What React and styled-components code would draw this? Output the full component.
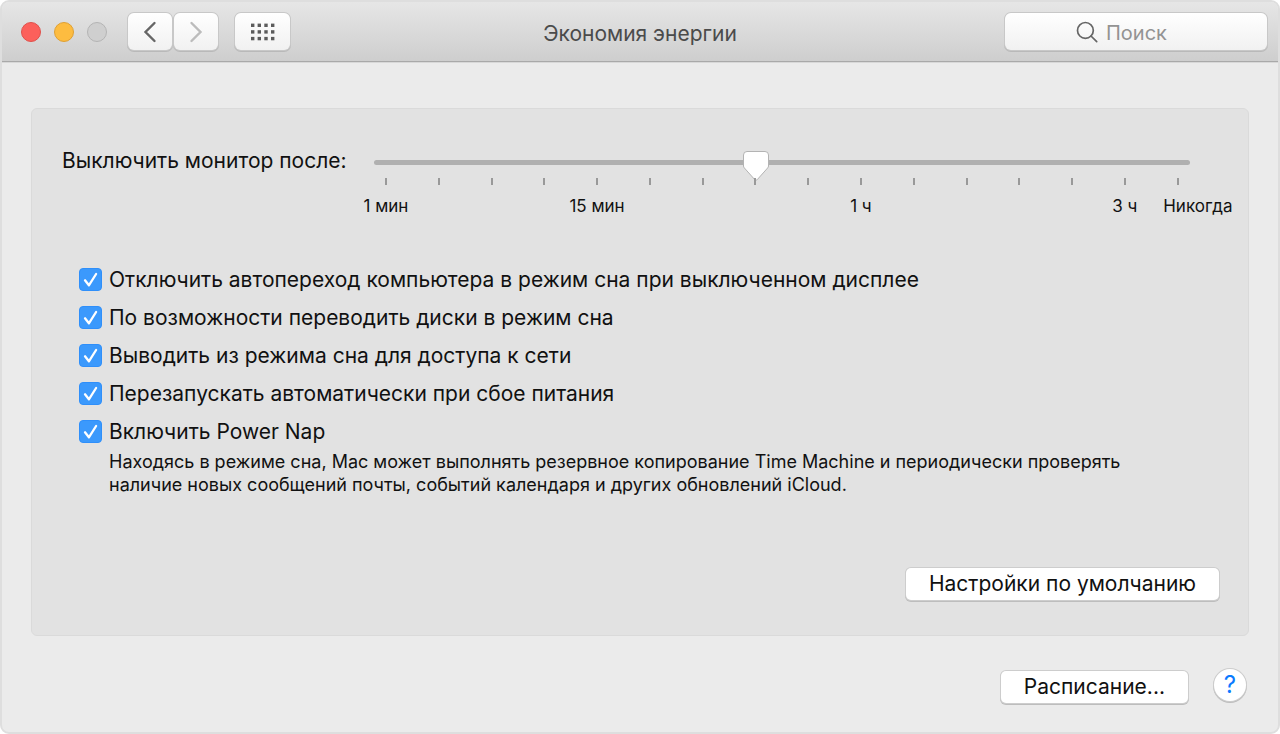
import React, { useState } from "react";
import styled, { createGlobalStyle } from "styled-components";

const GlobalStyle = createGlobalStyle`
  *, *::before, *::after { box-sizing: border-box; }
  body {
    margin: 0;
    background: #fff;
    color: #111;
    font-family: Inter, "Liberation Sans", sans-serif;
    font-size: 21px;
    line-height: 26px;
  }
  button, input { font: inherit; color: inherit; }
`;

const Window = styled.div`
  display: flex;
  flex-direction: column;
  min-height: 100vh;
  border: 2px solid #dedede;
  border-radius: 9px;
  background: #ebebeb;
  overflow: hidden;
`;

const TitleBar = styled.header`
  display: grid;
  grid-template-columns: 1fr auto 1fr;
  align-items: center;
  height: 60px;
  padding: 0 11px;
  border-bottom: 1px solid #a9a9a9;
  background: linear-gradient(#e6e6e6, #cecece);
  box-shadow: 0 1px 0 #d8d8d8;
`;

const TitleStart = styled.div`
  display: flex;
  align-items: center;
  gap: 17px;
  padding-left: 8px;
`;

const Lights = styled.div`
  display: flex;
  gap: 13px;
  margin-right: 4px;
`;

const lightColors = {
  close: ["#fc605b", "#e0504b"],
  minimize: ["#fdbc40", "#dfa033"],
  zoom: ["#cfcfcf", "#b4b4b4"],
};

const Light = styled.button`
  width: 20px;
  height: 20px;
  padding: 0;
  border: 1px solid ${(p) => lightColors[p.$kind][1]};
  border-radius: 50%;
  background: ${(p) => lightColors[p.$kind][0]};
`;

const NavGroup = styled.div`
  display: flex;
  gap: 2px;
`;

const ToolButton = styled.button`
  display: flex;
  align-items: center;
  justify-content: center;
  width: ${(p) => (p.$wide ? 55 : 44)}px;
  height: 37px;
  padding: 0;
  border: 0;
  border-radius: 6px;
  background: linear-gradient(#fff, #f1f1f1);
  box-shadow: 0 0 0 1px #c8c8c8, 0 1px 0 1px #b9b9b9;
  color: ${(p) => (p.disabled ? "#bcbcbc" : "#666")};
`;

const Title = styled.h1`
  margin: 0;
  padding-top: 4px;
  font-size: 21px;
  font-weight: 400;
  color: #4b4b4b;
`;

const SearchField = styled.label`
  justify-self: end;
  display: flex;
  align-items: center;
  gap: 8px;
  width: 262px;
  height: 37px;
  padding-left: 71px;
  border-radius: 6px;
  background: linear-gradient(#fff, #f1f1f1);
  box-shadow: 0 0 0 1px #c8c8c8, 0 1px 0 1px #b9b9b9;
  color: #666;
`;

const SearchInput = styled.input`
  flex: 1;
  min-width: 0;
  padding: 2px 0 0;
  border: 0;
  outline: 0;
  background: none;
  font-size: 20px;
  &::placeholder { color: #939393; opacity: 1; }
`;

const Body = styled.main`
  flex: 1;
  display: flex;
  flex-direction: column;
  padding: 46px 29px 29px;
`;

const Panel = styled.section`
  flex: 1;
  display: flex;
  flex-direction: column;
  padding: 33px 29px 35px 30px;
  border: 1px solid #dadada;
  border-radius: 6px;
  background: #e2e2e2;
`;

const SliderRow = styled.div`
  display: grid;
  grid-template-columns: auto 1fr;
  align-items: start;
  column-gap: 27px;
  padding-right: 29px;
`;

const SliderLabel = styled.label`
  padding-top: 6px;
`;

const thumbImage = encodeURIComponent(
  '<svg xmlns="http://www.w3.org/2000/svg" width="28" height="32" viewBox="0 0 28 32"><path d="M5 1.500h18q3.500 0 3.500 3.500v11q0 1-.8 1.900L15.200 29.700q-1.200 1.200-2.400 0L2.300 17.900Q1.500 17 1.500 16V5Q1.500 1.500 5 1.500Z" fill="#fff" stroke="#b3b3b3"/></svg>'
);

const Slider = styled.input`
  appearance: none;
  display: block;
  width: 100%;
  height: 32px;
  margin: 4px 0 0;
  background: none;
  &::-webkit-slider-runnable-track {
    height: 5px;
    border-radius: 3px;
    background: #b0b0b0;
  }
  &::-webkit-slider-thumb {
    appearance: none;
    width: 28px;
    height: 32px;
    margin-top: -10px;
    background: url("data:image/svg+xml,${thumbImage}") no-repeat;
  }
`;

const Scale = styled.div`
  display: grid;
  grid-template-columns: repeat(16, minmax(0, 1fr));
  margin: 0 -14px;
`;

const Stop = styled.div`
  display: flex;
  flex-direction: column;
  align-items: center;
  gap: 10px;
`;

const Tick = styled.span`
  width: 2px;
  height: 7px;
  background: #999;
`;

const StopLabel = styled.span`
  align-self: ${(p) => (p.$last ? "flex-start" : "center")};
  padding-left: ${(p) => (p.$last ? 12 : 0)}px;
  font-size: 17px;
  line-height: 22px;
  white-space: nowrap;
`;

const Options = styled.div`
  display: flex;
  flex-direction: column;
  gap: 2px;
  margin-top: 45px;
  padding-left: 17px;
`;

const Option = styled.label`
  display: flex;
  align-items: center;
  gap: 7px;
  height: 36px;
`;

const CheckBox = styled.span`
  display: grid;
  place-items: center;
  padding-bottom: 2px;
  & > * { grid-area: 1 / 1; }
  & > svg { pointer-events: none; }
  & > input:not(:checked) + svg { visibility: hidden; }
`;

const CheckInput = styled.input`
  appearance: none;
  width: 23px;
  height: 23px;
  margin: 0;
  border: 1px solid #2f8ffa;
  border-radius: 4px;
  background: #3b99fc;
  &:not(:checked) { background: #fff; border-color: #bdbdbd; }
`;

const Note = styled.p`
  max-width: 1100px;
  margin: 0;
  padding-left: 47px;
  font-size: 18px;
  line-height: 23px;
`;

const PushButton = styled.button`
  height: 32px;
  padding: 0 23px;
  border: 0;
  border-radius: 5px;
  background: #fff;
  box-shadow: 0 0 0 1px #cdcdcd, 0 1px 0 1px #bdbdbd;
  font-size: 21px;
`;

const PanelActions = styled.div`
  display: flex;
  justify-content: flex-end;
  margin-top: auto;
`;

const Footer = styled.footer`
  display: flex;
  justify-content: flex-end;
  align-items: flex-end;
  gap: 26px;
  padding: 33px 3px 0 0;
`;

const HelpButton = styled.button`
  width: 32px;
  height: 32px;
  margin-bottom: 2px;
  padding: 0;
  border: 0;
  border-radius: 50%;
  background: #fff;
  box-shadow: 0 0 0 1px #cdcdcd, 0 1px 0 1px #bdbdbd;
  color: #0a7aff;
  font-size: 24px;
`;

const stopLabels = { 0: "1 мин", 4: "15 мин", 9: "1 ч", 14: "3 ч", 15: "Никогда" };

const options = [
  "Отключить автопереход компьютера в режим сна при выключенном дисплее",
  "По возможности переводить диски в режим сна",
  "Выводить из режима сна для доступа к сети",
  "Перезапускать автоматически при сбое питания",
  "Включить Power Nap",
];

function Chevron({ forward }) {
  return (
    <svg width="14" height="22" viewBox="0 0 14 22" fill="none" stroke="currentColor" strokeWidth="2.400" strokeLinecap="round" aria-hidden="true">
      <path d={forward ? "M2.500 2 11.500 11 2.500 20" : "M11.500 2 2.500 11 11.500 20"} />
    </svg>
  );
}

function GridIcon() {
  return (
    <svg width="24" height="18" viewBox="0 0 24 18" fill="#5c5c5c" aria-hidden="true">
      {[0, 6.6, 13.3, 20].map((x) =>
        [0.6, 7.2, 13.9].map((y) => <rect key={`${x}-${y}`} x={x} y={y} width="3.400" height="3.400" />)
      )}
    </svg>
  );
}

export default function App() {
  const [delay, setDelay] = useState(7);
  return (
    <>
      <GlobalStyle />
      <Window>
        <TitleBar>
          <TitleStart>
            <Lights>
              <Light $kind="close" aria-label="Закрыть" />
              <Light $kind="minimize" aria-label="Свернуть" />
              <Light $kind="zoom" aria-label="Развернуть" disabled />
            </Lights>
            <NavGroup>
              <ToolButton aria-label="Назад"><Chevron /></ToolButton>
              <ToolButton aria-label="Вперёд" disabled><Chevron forward /></ToolButton>
            </NavGroup>
            <ToolButton $wide aria-label="Показать все"><GridIcon /></ToolButton>
          </TitleStart>
          <Title>Экономия энергии</Title>
          <SearchField>
            <svg width="22" height="22" viewBox="0 0 22 22" fill="none" stroke="currentColor" strokeWidth="1.700" strokeLinecap="round" aria-hidden="true">
              <circle cx="9.400" cy="9.400" r="7.900" />
              <path d="m15 15 5.700 5.700" />
            </svg>
            <SearchInput type="text" placeholder="Поиск" aria-label="Поиск" />
          </SearchField>
        </TitleBar>
        <Body>
          <Panel>
            <SliderRow>
              <SliderLabel htmlFor="display-delay">Выключить монитор после:</SliderLabel>
              <div>
                <Slider id="display-delay" type="range" min="0" max="15" value={delay} onChange={(e) => setDelay(Number(e.target.value))} />
                <Scale>
                  {Array.from({ length: 16 }, (_, i) => (
                    <Stop key={i}>
                      <Tick />
                      {stopLabels[i] && <StopLabel $last={i === 15}>{stopLabels[i]}</StopLabel>}
                    </Stop>
                  ))}
                </Scale>
              </div>
            </SliderRow>
            <Options>
              {options.map((text) => (
                <Option key={text}>
                  <CheckBox>
                    <CheckInput type="checkbox" defaultChecked />
                    <svg width="23" height="23" viewBox="0 0 23 23" fill="none" stroke="#fff" strokeWidth="2.300" strokeLinecap="round" strokeLinejoin="round" aria-hidden="true">
                      <path d="m6 12.300 3.900 5 7.200-11.300" />
                    </svg>
                  </CheckBox>
                  {text}
                </Option>
              ))}
            </Options>
            <Note>
              Находясь в режиме сна, Mac может выполнять резервное копирование Time Machine и периодически проверять
              наличие новых сообщений почты, событий календаря и других обновлений iCloud.
            </Note>
            <PanelActions>
              <PushButton>Настройки по умолчанию</PushButton>
            </PanelActions>
          </Panel>
          <Footer>
            <PushButton>Расписание...</PushButton>
            <HelpButton aria-label="Справка">?</HelpButton>
          </Footer>
        </Body>
      </Window>
    </>
  );
}
